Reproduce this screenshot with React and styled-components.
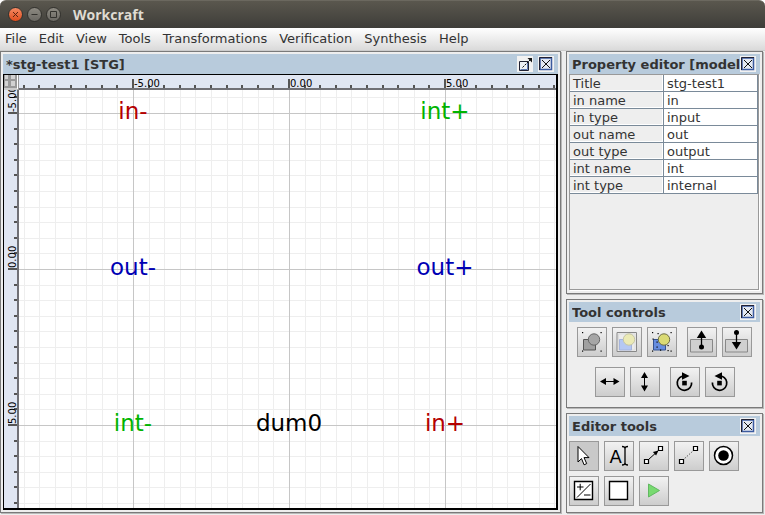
import React, { useEffect, useRef, useState } from "react";
import styled, { createGlobalStyle } from "styled-components";

const GlobalStyle = createGlobalStyle`
  *, *::before, *::after { box-sizing: border-box; }
  body { margin: 0; background: #fff; }
`;

const Window = styled.div`
  display: flex;
  flex-direction: column;
  min-height: 100vh;
  font: 13px/16px "DejaVu Sans", Verdana, sans-serif;
  color: #333;
`;

const TitleBar = styled.header`
  display: flex;
  align-items: center;
  gap: 4px;
  height: 28px;
  padding: 0 8px;
  border-radius: 6px 6px 0 0;
  border-top: 1px solid #6b685f;
  background: linear-gradient(#5a574e, #3e3d39);
`;

const WindowButton = styled.button`
  display: flex;
  width: 15px;
  height: 15px;
  padding: 0;
  border: 1px solid #33322e;
  border-radius: 50%;
  background: ${(p) => (p.$close ? "linear-gradient(#f58a63, #df4d1d)" : "linear-gradient(#8d8a82, #6a6862)")};
  svg { width: 13px; height: 13px; }
`;

const WindowTitle = styled.h1`
  margin: 0 0 0 8px;
  font: bold 14px/20px "Open Sans", "Noto Sans", sans-serif;
  color: #dfdbd2;
`;

const MenuBar = styled.nav`
  display: flex;
  gap: 12px;
  height: 23px;
  padding: 0 5px;
  border-bottom: 1px solid #ccc;
  background: linear-gradient(#fff, #dadada);
`;

const MenuItem = styled.button`
  padding: 0;
  border: 0;
  background: none;
  font: inherit;
  color: inherit;
`;

const Workspace = styled.main`
  flex: 1;
  display: grid;
  grid-template-columns: minmax(0, 1fr) 197px;
  gap: 5px;
  padding: 0 2px 2px 0;
  background: #eee;
`;

const SideColumn = styled.div`
  display: flex;
  flex-direction: column;
  gap: 5px;
`;

const Panel = styled.section`
  display: flex;
  flex-direction: column;
  flex: ${(p) => (p.$grow ? 1 : "none")};
  min-width: 0;
  padding: 2px;
  border: 1px solid #7a7a7a;
  box-shadow: 1px 1px 0 #b8b8b8;
  background: #eee;
`;

const PanelHeader = styled.div`
  display: flex;
  align-items: center;
  height: 20px;
  padding: 0 4px 0 3px;
  background: #b8cbdc;
`;

const PanelTitle = styled.h2`
  flex: 1;
  min-width: 0;
  overflow: hidden;
  margin: 0;
  padding-top: 2px;
  font-size: 13px;
  line-height: 18px;
  white-space: nowrap;
`;

const HeaderButton = styled.button`
  display: flex;
  flex: none;
  width: 16px;
  height: 16px;
  padding: 0;
  margin-left: ${(p) => (p.$spaced ? 5 : 0)}px;
  border: 0;
  background: #f2f2f2;
`;

const Editor = styled.div`
  flex: 1;
  display: grid;
  grid-template: 15px minmax(0, 1fr) / 15px minmax(0, 1fr);
  border: solid #000;
  border-width: 1px 2px 2px 1px;
  background: #fff;
`;

const Corner = styled.button`
  display: flex;
  padding: 0;
  border: 0;
  background: #999;
`;

const Ruler = styled.svg`
  width: 100%;
  height: 100%;
  min-height: 0;
  overflow: hidden;
  background: #e0e6f2;
  font: 10px "DejaVu Sans", sans-serif;
`;

const Canvas = styled.svg`
  width: 100%;
  height: 100%;
  min-height: 0;
  contain: size;
  overflow: hidden;
  font: 23px "DejaVu Sans", sans-serif;
`;

const PropertyArea = styled.div`
  flex: 1;
  margin: 0 1px 1px 0;
  border: 1px solid #999;
  box-shadow: 1px 1px 0 #fff;
`;

const PropertyTable = styled.table`
  width: 100%;
  border-spacing: 0;
  table-layout: fixed;
`;

const PropertyName = styled.th`
  height: 17px;
  padding: 2px 0 0 3px;
  border: solid #7a8a99;
  border-width: 0 1px 1px 0;
  box-shadow: inset -1px -1px 0 #fff;
  line-height: 14px;
  font-weight: normal;
  text-align: left;
`;

const PropertyValue = styled.td`
  height: 17px;
  padding: 2px 0 0 3px;
  border: solid #7a8a99;
  border-width: 0 1px 1px 0;
  background: #fff;
  line-height: 14px;
`;

const ControlRows = styled.div`
  display: flex;
  flex-direction: column;
  gap: 10px;
  padding: 5px 0 8px;
`;

const ControlRow = styled.div`
  display: flex;
  justify-content: center;
  gap: 10px;
`;

const ButtonGroup = styled.div`
  display: flex;
  gap: 5px;
`;

const ToolGrid = styled.div`
  display: flex;
  flex-wrap: wrap;
  gap: 5px;
  padding: 5px 0 4px;
`;

const ToolButton = styled.button`
  display: flex;
  width: 30px;
  height: 30px;
  padding: 0;
  border: 1px solid #999;
  background: ${(p) => (p.$selected ? "#c9c9c9" : "linear-gradient(#f2f2f2, #cdcdcd)")};
`;

const Icon = ({ children }) => (
  <svg width="28" height="28" viewBox="0 0 28 28" fill="none" stroke="#000" aria-hidden="true">
    {children}
  </svg>
);

const Dots = ({ points }) =>
  points.map(([x, y]) => <rect key={`${x}-${y}`} x={x} y={y} width="1.2" height="1.2" fill="#000" stroke="none" />);

const corners = [[4, 4], [22.5, 4], [4, 22.5], [22.5, 22.5]];

const GroupIcon = () => (
  <Icon>
    <path d="M5.5 11.5h12v10.500h-12z" fill="#a0a0a0" stroke="#555" />
    <circle cx="16" cy="11.500" r="5.700" fill="#a6a6a6" stroke="#666" />
    <Dots points={corners} />
  </Icon>
);

const PageIcon = () => (
  <Icon>
    <path d="M4 4.500h19.500v19H4z" fill="#ececec" stroke="#888" />
    <path d="M5.500 6h16.500v16H5.500z" stroke="#ddd" />
    <path d="M6.500 11.500h12v10.500h-12z" fill="#b5c8f2" stroke="#a5b4dc" />
    <circle cx="16" cy="11.500" r="5.700" fill="#ebeab5" stroke="#c5c5a5" />
  </Icon>
);

const UngroupIcon = () => (
  <Icon>
    <path d="M5.500 11.500h12v10.500h-12z" fill="#668de0" stroke="#34528f" />
    <circle cx="16" cy="11.500" r="5.700" fill="#dada74" stroke="#6d6d45" />
    <Dots points={[...corners, [8.500, 13.500], [8.500, 18.500], [4.500, 10.500], [12, 21.500], [19.500, 17], [19.500, 22], [9.500, 5]]} />
  </Icon>
);

const LevelUpIcon = () => (
  <Icon>
    <path d="M2.500 11.500h22v12.500h-22z" fill="#d0d0d0" stroke="#888" />
    <path d="M13.500 8v11" strokeWidth="1.300" />
    <path d="M13.500 2.500l4.700 7.500h-9.400z" fill="#000" stroke="none" />
    <circle cx="13.500" cy="19" r="2.500" fill="#000" stroke="none" />
  </Icon>
);

const LevelDownIcon = () => (
  <Icon>
    <path d="M2.500 11.500h22v12.500h-22z" fill="#d0d0d0" stroke="#888" />
    <path d="M13.500 4v11" strokeWidth="1.300" />
    <path d="M13.500 21.500l4.700-7.500h-9.400z" fill="#000" stroke="none" />
    <circle cx="13.500" cy="4.500" r="2.500" fill="#000" stroke="none" />
  </Icon>
);

const FlipPath = () => (
  <>
    <path d="M7 13.500h14" />
    <path d="M4 13.500l6-3.500v7zM23.500 13.500l-6-3.500v7z" fill="#000" stroke="none" />
  </>
);

const FlipHorizontalIcon = () => <Icon><FlipPath /></Icon>;
const FlipVerticalIcon = () => <Icon><g transform="rotate(90 13.500 13.500)"><FlipPath /></g></Icon>;

const RotatePath = () => (
  <>
    <path d="M11 8.300a7.200 7.200 0 1 0 9.600 6.200" strokeWidth="1.700" />
    <path d="M11 4.200l7.500 3.800-7.500 3.800z" fill="#000" stroke="none" />
    <path d="M11.200 12.800h4.600v4.600h-4.600z" fill="#000" stroke="none" />
  </>
);

const ClockwiseIcon = () => <Icon><RotatePath /></Icon>;
const CounterClockwiseIcon = () => <Icon><g transform="translate(27 0) scale(-1 1)"><RotatePath /></g></Icon>;

const SelectIcon = () => (
  <Icon>
    <path d="M8 4.500v15.500l3.500-3.400 2.600 6.200 2.600-1.200-2.700-6h5z" fill="#fff" strokeWidth="1" />
  </Icon>
);

const NoteIcon = () => (
  <Icon>
    <text x="4.500" y="21" fill="#000" stroke="none" fontSize="18" fontFamily="DejaVu Sans">A</text>
    <path d="M17 4.500q3 0 3 2 0-2 3-2M20 6v16M17 23q3 0 3-2 0 2 3 2" strokeWidth="1.300" />
  </Icon>
);

const Ends = () => <path d="M4.500 17.500h4v4h-4zM18.500 4.500h4v4h-4z" fill="#fff" strokeWidth="1.200" />;

const ConnectIcon = () => (
  <Icon>
    <path d="M8.500 17.500l10-9" />
    <path d="M18.500 8.500l-2.400 5-3.200-3.400z" fill="#000" stroke="none" />
    <Ends />
  </Icon>
);

const ReadArcIcon = () => (
  <Icon>
    <path d="M8.500 17.500l10-9" stroke="#333" strokeDasharray="1 1.500" />
    <Ends />
  </Icon>
);

const PlaceIcon = () => (
  <Icon>
    <circle cx="13.500" cy="13.500" r="9" fill="#fff" strokeWidth="1.500" />
    <circle cx="13.500" cy="13.500" r="5.300" fill="#000" stroke="none" />
  </Icon>
);

const SignalIcon = () => (
  <Icon>
    <path d="M4.500 4.500h18v18h-18z" fill="#fff" strokeWidth="1.400" />
    <path d="M7 20.500L20.500 7M7 10h6.500M10.200 6.800v6.500M14 18h6.500" />
  </Icon>
);

const DummyIcon = () => (
  <Icon><path d="M4.500 4.500h18v18h-18z" fill="#fff" strokeWidth="1.400" /></Icon>
);

const SimulateIcon = () => (
  <Icon><path d="M8.500 7l11 6.500-11 6.500z" fill="#78da70" stroke="#61b861" /></Icon>
);

const CloseButton = ({ spaced }) => (
  <HeaderButton $spaced={spaced} aria-label="Close">
    <svg width="16" height="16" viewBox="0 0 16 16" fill="none" aria-hidden="true">
      <path d="M2 2h11.500v11.500H2z" fill="#e4e9f2" stroke="#3c5ba0" strokeWidth="1.500" />
      <path d="M1.500 14V1.500H14" stroke="#223" />
      <path d="M4 4l8 8M12 4l-8 8" stroke="#111" />
    </svg>
  </HeaderButton>
);

const DetachButton = () => (
  <HeaderButton aria-label="Detach">
    <svg width="16" height="16" viewBox="0 0 16 16" fill="none" aria-hidden="true">
      <path d="M2.500 5.500h9v9h-9z" fill="#eef0f5" stroke="#223" />
      <path d="M3.500 13.500h7v-7" stroke="#6179b0" />
      <path d="M5.500 11.500L13 4" stroke="#111" strokeDasharray="2 1" />
      <path d="M10.500 2h4.500v4.500z" fill="#111" />
    </svg>
  </HeaderButton>
);

const UNIT = 156;
const ORIGIN_X = 270;
const ORIGIN_Y = 179;
const position = (origin, step) => Math.round(origin + (step * UNIT) / 10);

// Grid indices whose lines, a given distance apart, fall inside a length.
const visible = (origin, spacing, length) => {
  const first = Math.ceil(-origin / spacing);
  const last = Math.floor((length - origin) / spacing);
  return Array.from({ length: Math.max(0, last - first + 1) }, (_, i) => first + i);
};

const useSize = () => {
  const ref = useRef(null);
  const [size, setSize] = useState({ width: 540, height: 420 });
  useEffect(() => {
    const observer = new ResizeObserver(([entry]) => {
      const { width, height } = entry.contentRect;
      setSize({ width: width - 15, height: height - 15 });
    });
    observer.observe(ref.current);
    return () => observer.disconnect();
  }, []);
  return [ref, size];
};

const HorizontalRuler = ({ length }) => (
  <Ruler aria-hidden="true">
    {visible(ORIGIN_X, UNIT / 10, length).map((s) => (
      <rect key={s} x={position(ORIGIN_X, s) - 1} y="10" width="2" height="4" fill="#555" />
    ))}
    {visible(ORIGIN_X, UNIT, length).map((m) => (
      <g key={m}>
        <rect x={ORIGIN_X + m * UNIT - 1} y="4" width="2" height="10" fill="#555" />
        <text x={ORIGIN_X + m * UNIT + 1} y="12">{(m * 5).toFixed(2)}</text>
      </g>
    ))}
    <rect y="13" width="100%" height="2" fill="#707075" />
  </Ruler>
);

const VerticalRuler = ({ length }) => (
  <Ruler aria-hidden="true">
    {visible(ORIGIN_Y, UNIT / 10, length).map((s) => (
      <rect key={s} x="10" y={position(ORIGIN_Y, s) - 1} width="4" height="2" fill="#555" />
    ))}
    {visible(ORIGIN_Y, UNIT, length).map((m) => (
      <g key={m} transform={`translate(0 ${ORIGIN_Y + m * UNIT})`}>
        <rect x="4" y="-1" width="10" height="2" fill="#555" />
        <text transform="translate(12 -1) rotate(-90)">{(m * 5).toFixed(2)}</text>
      </g>
    ))}
    <rect x="13" width="2" height="100%" fill="#707075" />
  </Ruler>
);

const RED = "#b40000";
const GREEN = "#00b400";
const BLUE = "#0000b4";
const nodes = [
  ["in-", -1, -1, RED],
  ["int+", 1, -1, GREEN],
  ["out-", -1, 0, BLUE],
  ["out+", 1, 0, BLUE],
  ["int-", -1, 1, GREEN],
  ["dum0", 0, 1, "#000"],
  ["in+", 1, 1, RED],
];

const GridLines = ({ spacing, width, height, color }) => (
  <g fill={color}>
    {visible(ORIGIN_X, spacing, width).map((i) => (
      <rect key={`x${i}`} x={Math.round(ORIGIN_X + i * spacing)} width="1" height="100%" />
    ))}
    {visible(ORIGIN_Y, spacing, height).map((i) => (
      <rect key={`y${i}`} y={Math.round(ORIGIN_Y + i * spacing)} width="100%" height="1" />
    ))}
  </g>
);

const Drawing = ({ width, height }) => (
  <Canvas role="img" aria-label="Signal transition graph">
    <GridLines spacing={UNIT / 10} width={width} height={height} color="#eee" />
    <GridLines spacing={UNIT} width={width} height={height} color="#c6c6c6" />
    {nodes.map(([label, column, row, color]) => (
      <text key={label} x={ORIGIN_X + column * UNIT} y={ORIGIN_Y + row * UNIT + 6} textAnchor="middle" fill={color}>
        {label}
      </text>
    ))}
  </Canvas>
);

const GraphEditor = () => {
  const [ref, { width, height }] = useSize();
  return (
    <Editor ref={ref}>
      <Corner aria-label="Toggle grid">
        <svg width="15" height="15" viewBox="0 0 15 15" aria-hidden="true">
          <path d="M0 14h13.500V0" fill="none" stroke="#fff" />
          <path d="M1 0h3v4H1zM7 0h4v4H7zM1 6h3v5H1zM7 6h4v5H7z" fill="#d2d2d2" />
        </svg>
      </Corner>
      <HorizontalRuler length={width} />
      <VerticalRuler length={height} />
      <Drawing width={width} height={height} />
    </Editor>
  );
};

const menus = ["File", "Edit", "View", "Tools", "Transformations", "Verification", "Synthesis", "Help"];

const properties = [
  ["Title", "stg-test1"],
  ["in name", "in"],
  ["in type", "input"],
  ["out name", "out"],
  ["out type", "output"],
  ["int name", "int"],
  ["int type", "internal"],
];

const controlRows = [
  [
    [["Group", GroupIcon], ["Group into a page", PageIcon], ["Ungroup", UngroupIcon]],
    [["Level up", LevelUpIcon], ["Level down", LevelDownIcon]],
  ],
  [
    [["Flip horizontally", FlipHorizontalIcon], ["Flip vertically", FlipVerticalIcon]],
    [["Rotate clockwise", ClockwiseIcon], ["Rotate counterclockwise", CounterClockwiseIcon]],
  ],
];

const editorTools = [
  ["Select", SelectIcon],
  ["Text note", NoteIcon],
  ["Connect", ConnectIcon],
  ["Read arc", ReadArcIcon],
  ["Place", PlaceIcon],
  ["Signal transition", SignalIcon],
  ["Dummy transition", DummyIcon],
  ["Simulation", SimulateIcon],
];

export default function App() {
  return (
    <Window>
      <GlobalStyle />
      <TitleBar>
        <WindowButton $close aria-label="Close window">
          <svg viewBox="0 0 13 13" stroke="#5a2411"><path d="M4 4l5 5M9 4l-5 5" /></svg>
        </WindowButton>
        <WindowButton aria-label="Minimize window">
          <svg viewBox="0 0 13 13" stroke="#33322e"><path d="M3.500 6.500h6" /></svg>
        </WindowButton>
        <WindowButton aria-label="Maximize window">
          <svg viewBox="0 0 13 13" stroke="#33322e" fill="none"><path d="M3.500 3.500h6v6h-6z" /></svg>
        </WindowButton>
        <WindowTitle>Workcraft</WindowTitle>
      </TitleBar>
      <MenuBar>
        {menus.map((m) => <MenuItem key={m}>{m}</MenuItem>)}
      </MenuBar>
      <Workspace>
        <Panel>
          <PanelHeader>
            <PanelTitle>*stg-test1 [STG]</PanelTitle>
            <DetachButton />
            <CloseButton spaced />
          </PanelHeader>
          <GraphEditor />
        </Panel>
        <SideColumn>
          <Panel $grow>
            <PanelHeader>
              <PanelTitle>Property editor [model]</PanelTitle>
              <CloseButton />
            </PanelHeader>
            <PropertyArea>
              <PropertyTable>
                <tbody>
                  {properties.map(([name, value]) => (
                    <tr key={name}>
                      <PropertyName scope="row">{name}</PropertyName>
                      <PropertyValue>{value}</PropertyValue>
                    </tr>
                  ))}
                </tbody>
              </PropertyTable>
            </PropertyArea>
          </Panel>
          <Panel>
            <PanelHeader>
              <PanelTitle>Tool controls</PanelTitle>
              <CloseButton />
            </PanelHeader>
            <ControlRows>
              {controlRows.map((groups, row) => (
                <ControlRow key={row}>
                  {groups.map((group, i) => (
                    <ButtonGroup key={i}>
                      {group.map(([label, Glyph]) => (
                        <ToolButton key={label} aria-label={label}><Glyph /></ToolButton>
                      ))}
                    </ButtonGroup>
                  ))}
                </ControlRow>
              ))}
            </ControlRows>
          </Panel>
          <Panel>
            <PanelHeader>
              <PanelTitle>Editor tools</PanelTitle>
              <CloseButton />
            </PanelHeader>
            <ToolGrid>
              {editorTools.map(([label, Glyph], i) => (
                <ToolButton key={label} aria-label={label} $selected={i === 0}><Glyph /></ToolButton>
              ))}
            </ToolGrid>
          </Panel>
        </SideColumn>
      </Workspace>
    </Window>
  );
}
